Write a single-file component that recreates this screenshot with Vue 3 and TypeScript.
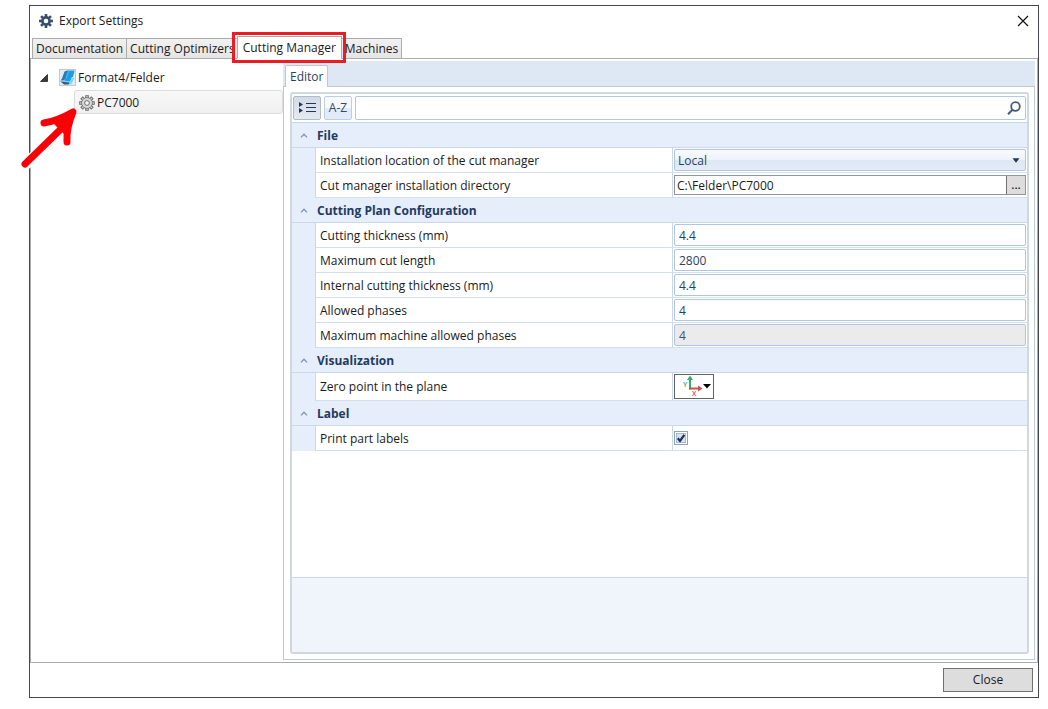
<script setup lang="ts">
import { reactive, ref } from 'vue'

type Kind = 'select' | 'path' | 'text' | 'disabled' | 'origin' | 'check'

interface Property {
  id: string
  label: string
  kind: Kind
}

interface Category {
  title: string
  rows: Property[]
}

const tabs: string[] = ['Documentation', 'Cutting Optimizers', 'Cutting Manager', 'Machines']
const activeTab = ref<string>('Cutting Manager')
const query = ref<string>('')
const printLabels = ref<boolean>(true)

const values = reactive<Record<string, string>>({
  location: 'Local',
  directory: 'C:\\Felder\\PC7000',
  thickness: '4.4',
  length: '2800',
  internal: '4.4',
  phases: '4',
  maxPhases: '4',
})

const categories: Category[] = [
  {
    title: 'File',
    rows: [
      { id: 'location', label: 'Installation location of the cut manager', kind: 'select' },
      { id: 'directory', label: 'Cut manager installation directory', kind: 'path' },
    ],
  },
  {
    title: 'Cutting Plan Configuration',
    rows: [
      { id: 'thickness', label: 'Cutting thickness (mm)', kind: 'text' },
      { id: 'length', label: 'Maximum cut length', kind: 'text' },
      { id: 'internal', label: 'Internal cutting thickness (mm)', kind: 'text' },
      { id: 'phases', label: 'Allowed phases', kind: 'text' },
      { id: 'maxPhases', label: 'Maximum machine allowed phases', kind: 'disabled' },
    ],
  },
  {
    title: 'Visualization',
    rows: [{ id: 'origin', label: 'Zero point in the plane', kind: 'origin' }],
  },
  {
    title: 'Label',
    rows: [{ id: 'print', label: 'Print part labels', kind: 'check' }],
  },
]

const teeth: number[] = [0, 45, 90, 135, 180, 225, 270, 315]
</script>

<template>
  <div class="page">
    <div class="window">
      <header class="titlebar">
        <svg class="title-icon" viewBox="0 0 16 16" aria-hidden="true">
          <g fill="#3a4f70">
            <rect v-for="a in teeth" :key="a" x="6.7" y="1" width="2.6" height="4" :transform="`rotate(${a} 8 8)`" />
          </g>
          <circle cx="8" cy="8" r="3.6" fill="none" stroke="#3a4f70" stroke-width="2.6" />
        </svg>
        <h1>Export Settings</h1>
        <button class="dismiss" type="button" aria-label="Close window">
          <svg viewBox="0 0 12 12"><path d="M1 1L11 11M11 1L1 11" stroke="#111" stroke-width="1.2" /></svg>
        </button>
      </header>

      <nav class="tabs" role="tablist">
        <button
          v-for="tab in tabs"
          :key="tab"
          class="tab"
          :class="{ active: tab === activeTab }"
          type="button"
          role="tab"
          :aria-selected="tab === activeTab"
          @click="activeTab = tab"
        >
          {{ tab }}
        </button>
      </nav>

      <main class="content">
        <aside class="tree">
          <div class="node root">
            <svg class="expander" viewBox="0 0 8 8" aria-hidden="true"><path d="M7.5 0.5V7.5H0.5Z" fill="#3c3c3c" stroke="#222" stroke-width="0.8" /></svg>
            <svg class="brand" viewBox="0 0 17 17" aria-hidden="true">
              <rect x="0.5" y="0.5" width="16" height="16" fill="#e3eaf0" stroke="#bccbd6" />
              <path d="M8 1.5H15.5L14 8H13L11 12.5H5L6 9.5Z" fill="#169fe2" />
              <path d="M5.5 2.5L8.5 1.5L6.5 9L5 11.5H1.5L3 9.5Z" fill="#2c77b4" />
              <path d="M1 12.5L5 11.5L10.5 12.5L13 9H15.5L12 15.5H9.5Z" fill="#7ed5f7" />
              <path d="M1.5 12.5L10.5 13.5L9.5 15.5H5Z" fill="#40596d" />
              <path d="M9.5 2L7 9.5" stroke="#64c9f3" stroke-width="0.7" />
            </svg>
            <span>Format4/Felder</span>
          </div>
          <div class="node child">
            <svg class="gear" viewBox="0 0 16 16" aria-hidden="true">
              <g fill="#d9d9d9" stroke="#707070" stroke-width="1">
                <rect v-for="a in teeth" :key="a" x="6.7" y="0.7" width="2.6" height="3.6" :transform="`rotate(${a} 8 8)`" />
                <circle cx="8" cy="8" r="5.3" />
              </g>
              <circle cx="8" cy="8" r="4.8" fill="#d9d9d9" />
              <circle cx="8" cy="8" r="2.4" fill="#f5f5f5" stroke="#707070" />
            </svg>
            <span>PC7000</span>
          </div>
        </aside>

        <section class="editor">
          <div class="editor-tabs" role="tablist">
            <button class="editor-tab" type="button" role="tab" aria-selected="true">Editor</button>
          </div>
          <div class="editor-body">
            <div class="grid">
              <div class="toolbar">
                <button class="tool pressed" type="button" aria-label="Group by category">
                  <svg viewBox="0 0 18 12" class="group-icon">
                    <path d="M1 0L5 2.5L1 5ZM1 6L5 8.5L1 11Z" fill="#22375c" />
                    <path d="M8 1.5H18M8 5.5H18M8 9.5H18" stroke="#22375c" stroke-width="1.2" />
                  </svg>
                </button>
                <button class="tool" type="button">A-Z</button>
                <div class="search">
                  <input v-model="query" type="text" aria-label="Search properties" />
                  <svg class="lens" viewBox="0 0 14 14" aria-hidden="true">
                    <circle cx="8.5" cy="5.5" r="4.3" fill="none" stroke="#44597a" stroke-width="1.8" />
                    <path d="M5.5 8.8L1 13.2" stroke="#44597a" stroke-width="2" />
                  </svg>
                </div>
              </div>

              <div class="properties">
                <section v-for="cat in categories" :key="cat.title">
                  <h2 class="category">
                    <svg viewBox="0 0 8 5" aria-hidden="true"><path d="M1 4.4L4 1.2L7 4.4" fill="none" stroke="#7d92b5" stroke-width="1.3" /></svg>
                    {{ cat.title }}
                  </h2>
                  <div v-for="row in cat.rows" :key="row.id" class="row" :class="row.kind">
                    <label class="name" :for="row.id">{{ row.label }}</label>
                    <div class="value">
                      <div v-if="row.kind === 'select'" class="combo">
                        <select :id="row.id" v-model="values[row.id]">
                          <option>Local</option>
                        </select>
                        <svg viewBox="0 0 8 5" aria-hidden="true"><path d="M0.5 0.3H7.5L4 4.8Z" fill="#22375c" /></svg>
                      </div>
                      <div v-else-if="row.kind === 'path'" class="path-box">
                        <input :id="row.id" v-model="values[row.id]" type="text" />
                        <button type="button" aria-label="Browse">...</button>
                      </div>
                      <button v-else-if="row.kind === 'origin'" :id="row.id" class="origin-button" type="button">
                        <svg viewBox="0 0 30 23" aria-hidden="true">
                          <path d="M9 14.5V3" stroke="#35ae68" stroke-width="2" />
                          <path d="M6 5L9 0.5L12 5Z" fill="#35ae68" />
                          <path d="M8 13.5H18" stroke="#c9504f" stroke-width="2" />
                          <path d="M17 10.5L21.5 13.5L17 16.5Z" fill="#c9504f" />
                          <text x="2" y="12" font-size="7" font-weight="600" fill="#35ae68">Y</text>
                          <text x="11" y="21" font-size="7" font-weight="600" fill="#c9504f">X</text>
                          <path d="M22 9H30L26 13.5Z" fill="#000" />
                        </svg>
                      </button>
                      <span v-else-if="row.kind === 'check'" class="check-box">
                        <input :id="row.id" v-model="printLabels" type="checkbox" />
                        <svg v-if="printLabels" viewBox="0 0 14 14" aria-hidden="true"><path d="M3.8 7.2L6 10L10.3 3.8" fill="none" stroke="#1d3152" stroke-width="2.2" /></svg>
                      </span>
                      <input
                        v-else
                        :id="row.id"
                        v-model="values[row.id]"
                        class="field"
                        type="text"
                        :disabled="row.kind === 'disabled'"
                      />
                    </div>
                  </div>
                </section>
              </div>

              <div class="description"></div>
            </div>
          </div>
        </section>
      </main>

      <footer class="footer">
        <button class="close" type="button">Close</button>
      </footer>
    </div>

    <svg class="pointer" viewBox="0 0 60 66" aria-hidden="true">
      <path d="M5 60L30 36" fill="none" stroke="#fff" stroke-width="11" stroke-linecap="round" />
      <g fill="none" stroke="#fb0007" stroke-width="7" stroke-linecap="round" stroke-linejoin="round">
        <path d="M5 59L43 22" />
        <path d="M24 18Q37 16 53 7Q46 24 47 37" />
      </g>
      <path d="M55 5L33 18L45 30Z" fill="#fb0007" />
    </svg>
  </div>
</template>

<style>
body {
  margin: 0;
  background: #fff;
}
</style>

<style scoped>
* {
  box-sizing: border-box;
}

.page {
  position: relative;
  display: flex;
  min-height: 100vh;
  padding: 5px 9px 11px 29px;
  font-family: "Open Sans", "Noto Sans", sans-serif;
  font-size: 12px;
  line-height: 16px;
  color: #1a1a1a;
}

button,
input,
select {
  margin: 0;
  padding: 0;
  border: 0;
  font: inherit;
  color: inherit;
  background: none;
}

svg {
  display: block;
  flex: none;
}

.window {
  display: flex;
  flex: 1;
  flex-direction: column;
  min-width: 0;
  border: 1px solid #45494f;
}

.titlebar {
  display: flex;
  align-items: center;
  height: 32px;
  padding: 0 9px 2px 8px;
}

.title-icon {
  width: 16px;
  height: 16px;
  margin-right: 5px;
}

h1 {
  flex: 1;
  margin: 0;
  font-size: 12px;
  font-weight: 400;
}

.dismiss svg {
  width: 12px;
  height: 12px;
}

.tabs {
  display: flex;
  position: relative;
  z-index: 1;
  height: 21px;
  margin-bottom: -1px;
  padding-left: 2px;
}

.tab {
  padding: 0 3px;
  border: 1px solid #acacac;
  background: linear-gradient(#f1f1f1, #e5e5e5);
  white-space: nowrap;
}

.tab + .tab {
  border-left: 0;
}

.tab + .tab.active {
  position: relative;
  margin: -2px 0 0 -2px;
  padding: 0 5px;
  border-left: 1px solid #acacac;
  border-bottom-color: #fff;
  background: #fff;
}

.tab.active::after {
  content: "";
  position: absolute;
  inset: -5px -5px -5px -6px;
  border: 3px solid #ed1c24;
}

.content {
  display: flex;
  flex: 1;
  border: 1px solid #acacac;
  padding: 2px;
}

.tree {
  flex: 0 0 250px;
  padding-top: 6px;
}

.node {
  display: flex;
  align-items: center;
}

.root {
  height: 21px;
  padding-left: 7px;
}

.expander {
  width: 8px;
  height: 8px;
  margin-right: 11px;
}

.brand {
  width: 17px;
  height: 17px;
  margin-right: 2px;
}

.child {
  height: 24px;
  margin: 2px 0 0 41px;
  padding: 1px 0 0 4px;
  border: 1px solid #dcdcdc;
  border-radius: 3px;
  background: linear-gradient(#f8f8f8, #f0f0f0);
}

.gear {
  width: 16px;
  height: 16px;
  margin-right: 2px;
}

.editor {
  display: flex;
  flex: 1;
  flex-direction: column;
  min-width: 0;
}

.editor-tabs {
  height: 25px;
  padding: 4px 0 0 2px;
  background: #dee8f4;
}

.editor-tab {
  position: relative;
  height: 22px;
  padding: 0 4px;
  border: 1px solid #b5c8dc;
  border-bottom: 0;
  border-radius: 2px 2px 0 0;
  background: #fff;
  color: #2b3f63;
}

.editor-body {
  display: flex;
  flex: 1;
  padding: 5px 5px 5px 6px;
  border: 1px solid #bccad6;
}

.grid {
  display: flex;
  flex: 1;
  flex-direction: column;
  min-width: 0;
  border: 2px solid #cfd8e2;
  border-radius: 3px;
}

.toolbar {
  display: flex;
  gap: 3px;
  height: 29px;
  padding: 2px 1px;
  border-bottom: 1px solid #c8d6e6;
}

.tool {
  display: grid;
  place-items: center;
  flex: none;
  width: 28px;
  height: 24px;
  border: 1px solid #bccfe6;
  border-radius: 2px;
  background: linear-gradient(#f7fafd 50%, #e2ecf8 50%);
  color: #33496b;
}

.tool.pressed {
  border-color: #aebccd;
  background: linear-gradient(#d3dbe6, #e5eaf1);
}

.group-icon {
  width: 18px;
  height: 12px;
}

.search {
  display: flex;
  flex: 1;
  align-items: center;
  height: 24px;
  padding-right: 4px;
  border: 1px solid #b4c8e2;
  border-radius: 2px;
}

.search input {
  flex: 1;
  padding: 0 4px;
}

.lens {
  width: 14px;
  height: 14px;
}

.properties {
  flex: 1;
}

.category {
  display: flex;
  align-items: center;
  gap: 9px;
  height: 25px;
  margin: 0;
  padding: 1px 0 0 8px;
  border-bottom: 1px solid #cbd8e8;
  background: #e7eefb;
  font-size: 12px;
  font-weight: 700;
  color: #233a63;
}

.category svg {
  width: 8px;
  height: 5px;
}

.row {
  display: grid;
  grid-template-columns: 357fr 355fr;
  min-height: 25px;
  padding-left: 23px;
  background: linear-gradient(90deg, #e7eefb 23px, #fff 23px);
}

.row.origin {
  min-height: 28px;
}

.name,
.value {
  display: flex;
  align-items: center;
  min-width: 0;
  border-bottom: 1px solid #d3dfec;
  border-left: 1px solid #cbd8e8;
}

.name {
  padding: 1px 0 0 4px;
  white-space: nowrap;
}

.value {
  padding: 0 1px;
}

.combo,
.path-box {
  display: flex;
  flex: 1;
  align-items: center;
  min-width: 0;
}

.combo {
  height: 22px;
  padding-right: 5px;
  border: 1px solid #b0c5de;
  border-radius: 2px;
  background: linear-gradient(#f8fafd, #edf3fa 50%, #dde8f5 50%, #e3ecf7);
  color: #2b3f63;
}

.combo select {
  flex: 1;
  height: 20px;
  padding: 2px 0 0 3px;
  appearance: none;
}

.combo svg {
  width: 8px;
  height: 5px;
}

.path-box {
  height: 20px;
  border: 1px solid #8e959c;
}

.path-box input {
  flex: 1;
  min-width: 0;
  height: 18px;
  padding-left: 2px;
}

.path-box button {
  width: 19px;
  height: 18px;
  border-left: 1px solid #707070;
  background: #ddd;
  color: #000;
}

.field {
  flex: 1;
  min-width: 0;
  height: 22px;
  padding: 0 4px;
  border: 1px solid #b0c5de;
  border-radius: 2px;
  background: #fff;
  color: #2b3f63;
}

.field:disabled {
  background: #ebebeb;
  color: #3f526f;
}

.origin-button {
  display: grid;
  place-items: center end;
  width: 40px;
  height: 25px;
  padding-right: 2px;
  border: 1px solid #5e6468;
  background: #fff;
}

.origin-button svg {
  width: 30px;
  height: 23px;
}

.check-box {
  display: grid;
}

.check-box > * {
  grid-area: 1 / 1;
  width: 14px;
  height: 14px;
}

.check-box input {
  appearance: none;
  border: 1px solid #8fa3bd;
  background: #d3e1f3;
  box-shadow: inset 0 0 0 1px #fff, inset 0 0 0 2px #a9bbd4;
}

.check-box svg {
  pointer-events: none;
}

.description {
  height: 75px;
  border-top: 1px solid #cdd8e4;
  background: #f0f4fb;
}

.footer {
  display: flex;
  justify-content: flex-end;
  padding: 5px;
}

.close {
  width: 90px;
  height: 24px;
  border: 1px solid #707070;
  background: #ddd;
}

.pointer {
  position: absolute;
  top: 105px;
  left: 20px;
  width: 60px;
  height: 66px;
  pointer-events: none;
}
</style>
